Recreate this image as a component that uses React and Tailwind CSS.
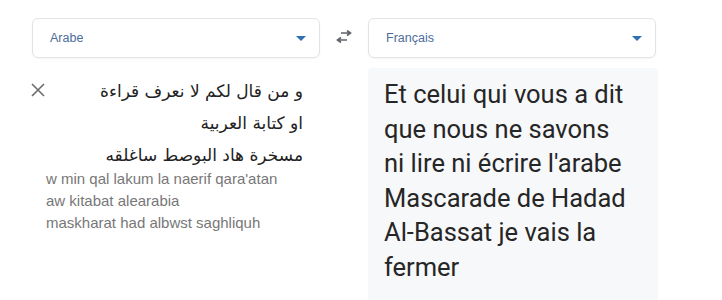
import React from "react";

function Caret() {
  return (
    <svg width="10" height="5" viewBox="0 0 10 5" className="shrink-0">
      <path d="M0 0h10L5 5z" fill="#2f6fb5" />
    </svg>
  );
}

function LangSelect({ label }) {
  return (
    <div className="flex h-[40px] w-[288px] items-center justify-between rounded-[6px] border border-[#e3e3e3] bg-white pl-[17px] pr-[13px] shadow-[0_1px_2px_rgba(0,0,0,0.04)]">
      <span className="text-[12.5px] text-[#4c6c9c]">{label}</span>
      <Caret />
    </div>
  );
}

function SwapIcon() {
  return (
    <svg width="18" height="14" viewBox="0 0 18 14" className="mt-[-2px]">
      <path d="M6 3h9M12 0.5L15.5 3 12 5.5" fill="none" stroke="#5f6368" strokeWidth="1.6" />
      <path d="M12 10H3M6 7.5L2.5 10 6 12.5" fill="none" stroke="#5f6368" strokeWidth="1.6" />
    </svg>
  );
}

export default function App() {
  return (
    <div className="h-[300px] w-[722px] overflow-hidden bg-white font-['Liberation_Sans',Arial,sans-serif]">
      <div className="flex items-start pl-[32px] pt-[18px]">
        <div className="flex w-[288px] flex-col">
          <LangSelect label="Arabe" />
          <div className="mt-[17px] flex items-start">
            <svg width="14" height="14" viewBox="0 0 14 14" className="ml-[-1px] mt-[8px] shrink-0">
              <path d="M1 1l12 12M13 1L1 13" stroke="#6b6b6b" strokeWidth="1.6" />
            </svg>
            <div
              dir="rtl"
              className="flex-1 pl-[10px] pr-[17px] text-right font-['DejaVu_Sans',sans-serif] text-[17px] leading-[32px] text-[#222]"
            >
              <div>و من قال لكم لا نعرف قراءة</div>
              <div>او كتابة العربية</div>
              <div>مسخرة هاد البوصط ساغلقه</div>
            </div>
          </div>
          <div className="mt-[-3px] pl-[14px] text-[15px] leading-[22px] text-[#777]">
            <div>w min qal lakum la naerif qara'atan</div>
            <div>aw kitabat alearabia</div>
            <div>maskharat had albwst saghliquh</div>
          </div>
        </div>
        <div className="flex w-[48px] justify-center pt-[14px]">
          <SwapIcon />
        </div>
        <div className="flex w-[290px] flex-col">
          <LangSelect label="Français" />
          <div className="mt-[10px] h-[240px] rounded-t-[4px] bg-[#f7f8fa] pl-[16px] pt-[9px] font-['Roboto',sans-serif] text-[25.5px] leading-[34.6px] text-[#262626]">
            Et celui qui vous a dit
            <br />
            que nous ne savons
            <br />
            ni lire ni écrire l'arabe
            <br />
            Mascarade de Hadad
            <br />
            Al-Bassat je vais la
            <br />
            fermer
          </div>
        </div>
      </div>
    </div>
  );
}
